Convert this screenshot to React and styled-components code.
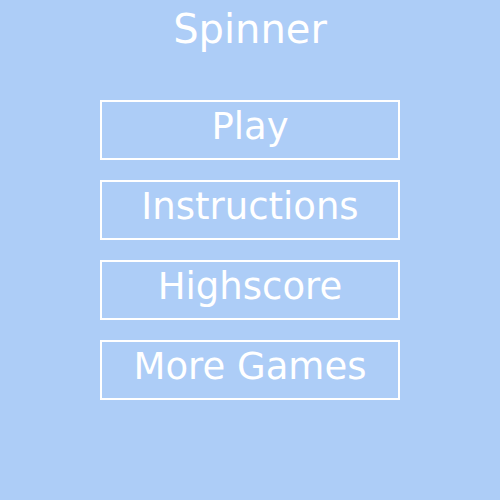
import React from "react";
import styled, { createGlobalStyle } from "styled-components";

const Global = createGlobalStyle`
  html, body { margin: 0; padding: 0; background: #adcdf7; }
  body { font-family: "DejaVu Sans", Verdana, sans-serif; }
`;

const Screen = styled.div`
  width: 500px;
  height: 500px;
  background: #adcdf7;
  display: flex;
  flex-direction: column;
  align-items: center;
  color: #ffffff;
`;

const Title = styled.h1`
  margin: 0;
  height: 60px;
  line-height: 58px;
  font-size: 40px;
  font-weight: normal;
`;

const Menu = styled.div`
  margin-top: 40px;
  display: flex;
  flex-direction: column;
  gap: 20px;
`;

const MenuButton = styled.div`
  box-sizing: border-box;
  width: 300px;
  height: 60px;
  border: 2px solid #ffffff;
  font-size: 37px;
  line-height: 49px;
  text-align: center;
  color: #ffffff;
`;

export default function App() {
  const items = ["Play", "Instructions", "Highscore", "More Games"];
  return (
    <>
      <Global />
      <Screen>
        <Title>Spinner</Title>
        <Menu>
          {items.map((t) => (
            <MenuButton key={t}>{t}</MenuButton>
          ))}
        </Menu>
      </Screen>
    </>
  );
}
